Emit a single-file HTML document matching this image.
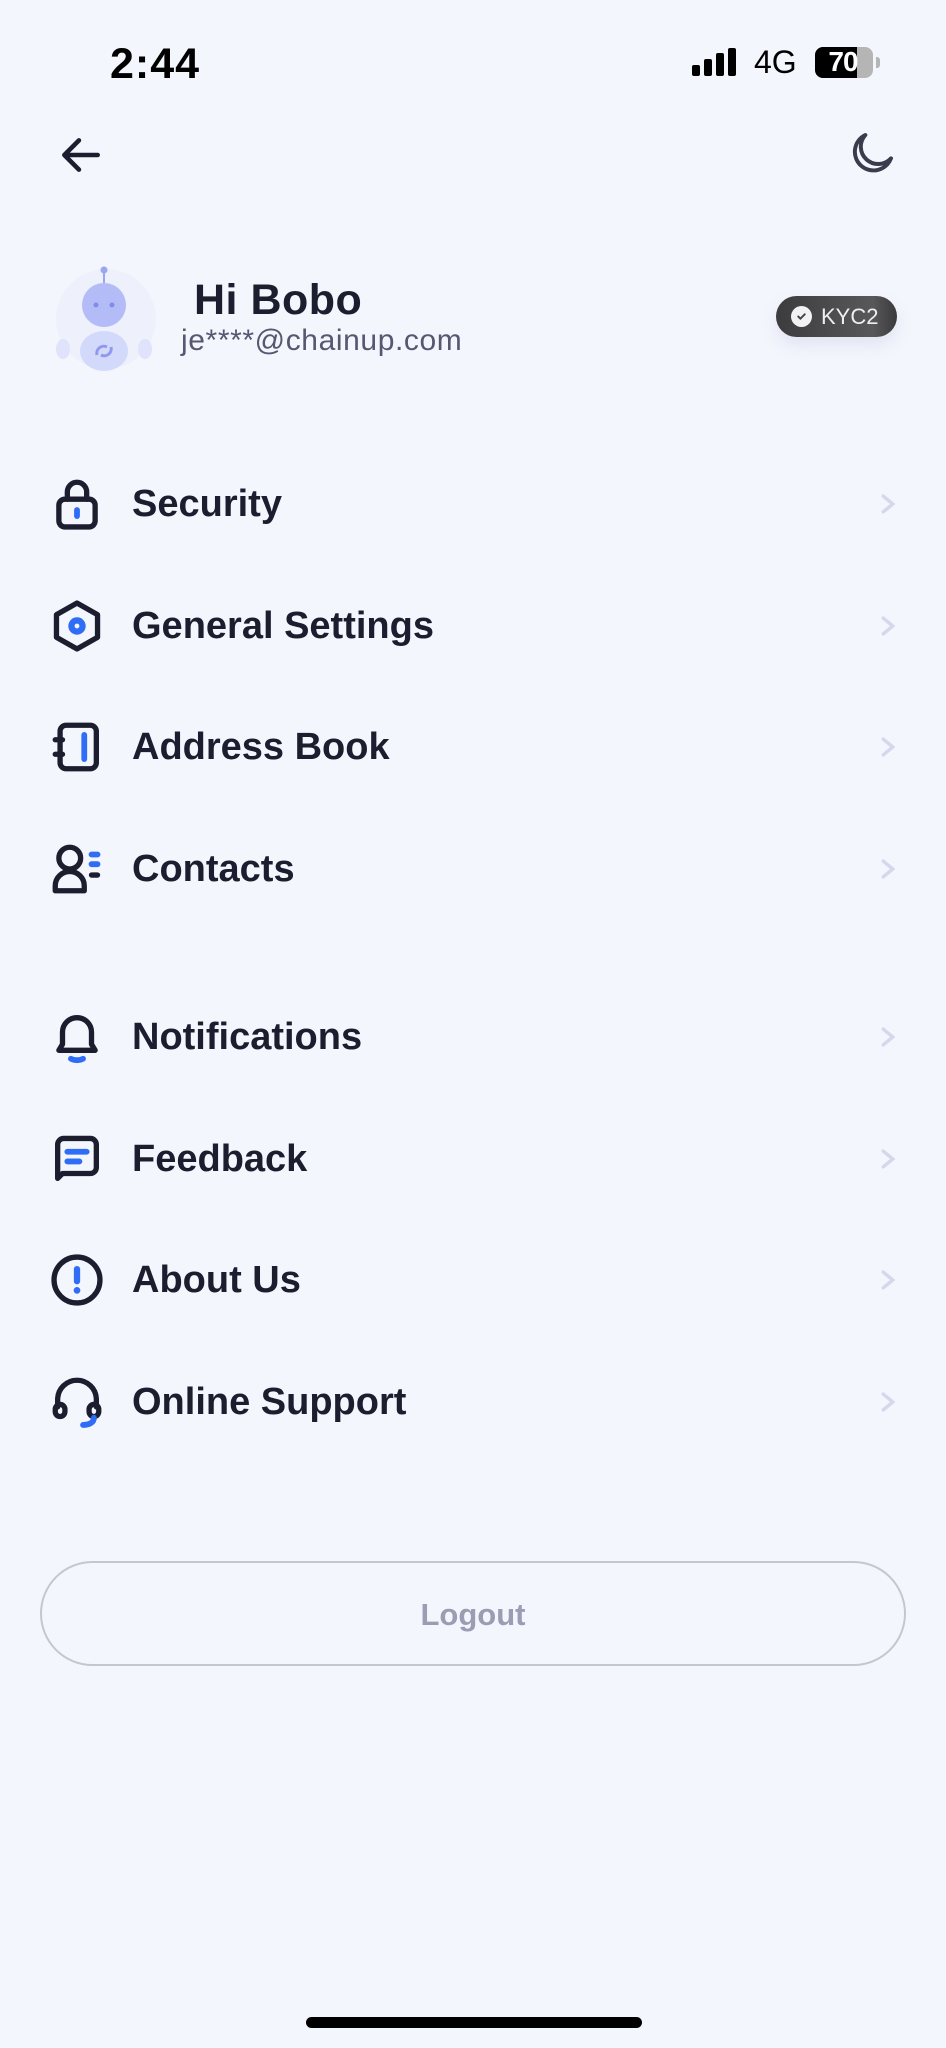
<!DOCTYPE html>
<html><head><meta charset="utf-8"><style>
*{margin:0;padding:0;box-sizing:border-box}
body{width:946px;height:2048px;background:#f4f6fd;font-family:"Liberation Sans",sans-serif;position:relative;overflow:hidden;color:#1c1d2e}
.a{position:absolute}
.row{position:absolute;left:0;width:946px;height:80px}
.row svg.ic{position:absolute;left:48px;top:11px;width:58px;height:58px}
.row .t{position:absolute;left:132px;top:18px;font-size:38px;font-weight:bold;line-height:44px;color:#1c1d2e}
.row svg.ch{position:absolute;left:878px;top:29px;width:20px;height:22px}
</style></head><body>
<div class="a" style="left:110px;top:40px;font-size:43px;font-weight:bold;color:#000;letter-spacing:1px">2:44</div>
<div class="a" style="left:692px;top:48px;width:48px;height:28px">
<div class="a" style="left:0;top:17px;width:8px;height:11px;background:#000;border-radius:2px"></div>
<div class="a" style="left:12px;top:11px;width:8px;height:17px;background:#000;border-radius:2px"></div>
<div class="a" style="left:24px;top:5px;width:8px;height:23px;background:#000;border-radius:2px"></div>
<div class="a" style="left:36px;top:0;width:8px;height:28px;background:#000;border-radius:2px"></div>
</div>
<div class="a" style="left:754px;top:44px;font-size:32px;color:#000">4G</div>
<div class="a" style="left:815px;top:47px;width:58px;height:31px;border-radius:8px;background:#b5b5b5;overflow:hidden"><div style="width:42px;height:31px;background:#000"></div></div>
<div class="a" style="left:876px;top:57px;width:4px;height:11px;background:#b5b5b5;border-radius:0 3px 3px 0"></div>
<div class="a" style="left:815px;top:48px;width:56px;text-align:center;font-size:28px;font-weight:bold;color:#fff;letter-spacing:-1px;line-height:28px">70</div>

<svg class="a" style="left:56px;top:130px" width="50" height="50" viewBox="0 0 24 24" fill="none" stroke="#1c1d2e" stroke-width="2.2" stroke-linecap="round" stroke-linejoin="round"><path d="M20 12H4M11 5l-7 7 7 7"/></svg>
<svg class="a" style="left:842px;top:128px" width="56" height="56" viewBox="0 0 24 24" fill="none" stroke="#3a3c4e" stroke-width="1.7" stroke-linecap="round" stroke-linejoin="round"><path d="M10 3a8 8 0 1 0 11 10A7 7 0 0 1 10 3z"/></svg>

<svg class="a" style="left:53px;top:263px" width="106" height="110" viewBox="0 0 106 110">
<circle cx="53" cy="56" r="50" fill="#eef1fb"/>
<line x1="51" y1="8" x2="51" y2="20" stroke="#9aa6f0" stroke-width="2"/><circle cx="51" cy="7" r="3.5" fill="#9aa6f0"/>
<circle cx="51" cy="42" r="22" fill="#b3bcf6"/>
<circle cx="43" cy="42" r="2.5" fill="#7f8ce8"/><circle cx="59" cy="42" r="2.5" fill="#7f8ce8"/>
<ellipse cx="51" cy="88" rx="24" ry="20" fill="#d3d9fb"/>
<ellipse cx="10" cy="86" rx="7" ry="10" fill="#dfe3fb"/><ellipse cx="92" cy="86" rx="7" ry="10" fill="#dfe3fb"/>
<path d="M44 92a7 7 0 0 1 10-8M58 84a7 7 0 0 1-10 8" stroke="#8f9aee" stroke-width="3" fill="none"/>
</svg>
<div class="a" style="left:194px;top:276px;font-size:43px;font-weight:bold;color:#1c1d2e;letter-spacing:0.5px">Hi Bobo</div>
<div class="a" style="left:181px;top:324px;font-size:30px;color:#555870;letter-spacing:0.6px">je****@chainup.com</div>
<div class="a" style="left:776px;top:296px;width:121px;height:41px;border-radius:21px;background:linear-gradient(90deg,#3c3c3e,#58585a 80%,#3a3a3c);box-shadow:0 8px 16px rgba(120,130,180,.15)">
<div class="a" style="left:15px;top:10px;width:21px;height:21px;border-radius:50%;background:#f2f2f2"></div>
<svg class="a" style="left:19px;top:14px" width="13" height="13" viewBox="0 0 12 12"><path d="M3 6l2 2 4-4" stroke="#444" stroke-width="1.8" fill="none" stroke-linecap="round"/></svg>
<div class="a" style="left:45px;top:8px;font-size:22px;color:#eee">KYC2</div>
</div>

<div class="row" style="top:464px">
<svg class="ic" viewBox="0 0 24 24" fill="none" stroke="#1c1d2e" stroke-width="2.2" stroke-linecap="round" stroke-linejoin="round"><rect x="4.5" y="10" width="15" height="11.5" rx="2.5"/><path d="M8 10V7a4 4 0 0 1 8 0v3"/><path d="M12 14.5v2.5" stroke="#2f6df6" stroke-width="2.4"/></svg>
<div class="t">Security</div>
<svg class="ch" viewBox="0 0 12 14"><path d="M3 2l6 5-6 5" stroke="#d6d7ec" stroke-width="2.2" fill="none" stroke-linecap="round"/></svg></div>

<div class="row" style="top:586px">
<svg class="ic" viewBox="0 0 24 24" fill="none" stroke="#1c1d2e" stroke-width="2.2" stroke-linejoin="round"><path d="M12 2.5l8.5 4.8v9.4L12 21.5l-8.5-4.8V7.3z"/><circle cx="12" cy="12" r="2.3" stroke="#2f6df6" stroke-width="2.6"/></svg>
<div class="t">General Settings</div>
<svg class="ch" viewBox="0 0 12 14"><path d="M3 2l6 5-6 5" stroke="#d6d7ec" stroke-width="2.2" fill="none" stroke-linecap="round"/></svg></div>

<div class="row" style="top:707px">
<svg class="ic" viewBox="0 0 24 24" fill="none" stroke="#1c1d2e" stroke-width="2.2" stroke-linecap="round" stroke-linejoin="round"><rect x="5" y="3" width="15" height="18" rx="2.5"/><path d="M3 9h3M3 15h3"/><path d="M15 7v10" stroke="#2f6df6" stroke-width="2.4"/></svg>
<div class="t">Address Book</div>
<svg class="ch" viewBox="0 0 12 14"><path d="M3 2l6 5-6 5" stroke="#d6d7ec" stroke-width="2.2" fill="none" stroke-linecap="round"/></svg></div>

<div class="row" style="top:829px">
<svg class="ic" viewBox="0 0 24 24" fill="none" stroke="#1c1d2e" stroke-width="2.2" stroke-linecap="round" stroke-linejoin="round"><circle cx="9" cy="7.5" r="4.5"/><path d="M3 21v-2a6 6 0 0 1 12 0v2z"/><path d="M18 6h2.5M18 10h2.5" stroke="#2f6df6" stroke-width="2.4"/><path d="M18 14.5h2.5"/></svg>
<div class="t">Contacts</div>
<svg class="ch" viewBox="0 0 12 14"><path d="M3 2l6 5-6 5" stroke="#d6d7ec" stroke-width="2.2" fill="none" stroke-linecap="round"/></svg></div>

<div class="row" style="top:997px">
<svg class="ic" viewBox="0 0 24 24" fill="none" stroke="#1c1d2e" stroke-width="2.2" stroke-linecap="round" stroke-linejoin="round"><path d="M6 15V10a6 6 0 0 1 12 0v5l1.5 2.5h-15z"/><path d="M9.5 21c1.5.8 3.5.8 5 0" stroke="#2f6df6" stroke-width="2.4"/></svg>
<div class="t">Notifications</div>
<svg class="ch" viewBox="0 0 12 14"><path d="M3 2l6 5-6 5" stroke="#d6d7ec" stroke-width="2.2" fill="none" stroke-linecap="round"/></svg></div>

<div class="row" style="top:1119px">
<svg class="ic" viewBox="0 0 24 24" fill="none" stroke="#1c1d2e" stroke-width="2.2" stroke-linecap="round" stroke-linejoin="round"><path d="M4 20V6a2.5 2.5 0 0 1 2.5-2.5h11A2.5 2.5 0 0 1 20 6v9.5a2.5 2.5 0 0 1-2.5 2.5H6z"/><path d="M8 9h8M8 13h5" stroke="#2f6df6" stroke-width="2.4"/></svg>
<div class="t">Feedback</div>
<svg class="ch" viewBox="0 0 12 14"><path d="M3 2l6 5-6 5" stroke="#d6d7ec" stroke-width="2.2" fill="none" stroke-linecap="round"/></svg></div>

<div class="row" style="top:1240px">
<svg class="ic" viewBox="0 0 24 24" fill="none" stroke="#1c1d2e" stroke-width="2.2" stroke-linecap="round"><circle cx="12" cy="12" r="9.5"/><path d="M12 7.5v5" stroke="#2f6df6" stroke-width="2.6"/><circle cx="12" cy="16.3" r="1.4" fill="#2f6df6" stroke="none"/></svg>
<div class="t">About Us</div>
<svg class="ch" viewBox="0 0 12 14"><path d="M3 2l6 5-6 5" stroke="#d6d7ec" stroke-width="2.2" fill="none" stroke-linecap="round"/></svg></div>

<div class="row" style="top:1362px">
<svg class="ic" viewBox="0 0 24 24" fill="none" stroke="#1c1d2e" stroke-width="2.2" stroke-linecap="round" stroke-linejoin="round"><path d="M4 14v-3a8 8 0 0 1 16 0v3"/><rect x="3" y="13" width="4" height="5" rx="2"/><rect x="17" y="13" width="4" height="5" rx="2"/><path d="M19 18.5c0 2-2 3-4.5 3" stroke="#2f6df6" stroke-width="2.4"/></svg>
<div class="t">Online Support</div>
<svg class="ch" viewBox="0 0 12 14"><path d="M3 2l6 5-6 5" stroke="#d6d7ec" stroke-width="2.2" fill="none" stroke-linecap="round"/></svg></div>

<div class="a" style="left:40px;top:1561px;width:866px;height:105px;border:2px solid #c4c6d2;border-radius:53px;text-align:center;line-height:103px;font-size:31px;font-weight:bold;color:#9a9db3">Logout</div>
<div class="a" style="left:306px;top:2017px;width:336px;height:11px;border-radius:6px;background:#000"></div>
</body></html>
